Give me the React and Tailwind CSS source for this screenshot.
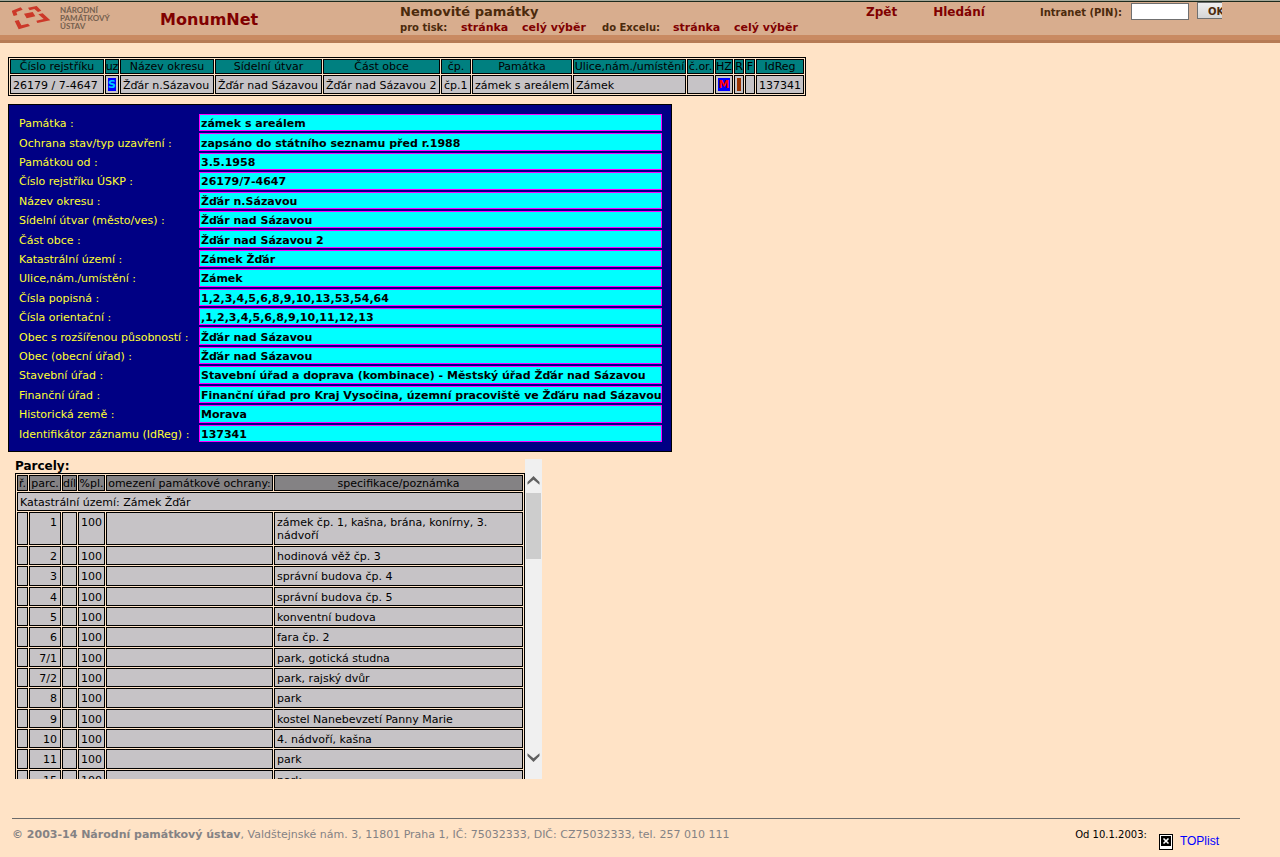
const columns = [
  { label: 'Číslo rejstříku', value: '26179 / 7-4647', width: 'w-[94px]' },
  { label: 'uz', value: 'S', width: 'w-[14px]' },
  { label: 'Název okresu', value: 'Žďár n.Sázavou', width: 'w-[94px]' },
  { label: 'Sídelní útvar', value: 'Žďár nad Sázavou', width: 'w-[107px]' },
  { label: 'Část obce', value: 'Žďár nad Sázavou 2', width: 'w-[117px]' },
  { label: 'čp.', value: 'čp.1', width: 'w-[30px]' },
  { label: 'Památka', value: 'zámek s areálem', width: 'w-[100px]' },
  { label: 'Ulice,nám./umístění', value: 'Zámek', width: 'w-[113px]' },
  { label: 'č.or.', value: '', width: 'w-[27px]' },
  { label: 'HZ', value: 'M', width: 'w-[18px]' },
  { label: 'R', value: '', width: 'w-[10px]' },
  { label: 'F', value: '', width: 'w-[10px]' },
  { label: 'IdReg', value: '137341', width: 'w-[48px]' },
];

const details = [
  ['Památka :', 'zámek s areálem'],
  ['Ochrana stav/typ uzavření :', 'zapsáno do státního seznamu před r.1988'],
  ['Památkou od :', '3.5.1958'],
  ['Číslo rejstříku ÚSKP :', '26179/7-4647'],
  ['Název okresu :', 'Žďár n.Sázavou'],
  ['Sídelní útvar (město/ves) :', 'Žďár nad Sázavou'],
  ['Část obce :', 'Žďár nad Sázavou 2'],
  ['Katastrální území :', 'Zámek Žďár'],
  ['Ulice,nám./umístění :', 'Zámek'],
  ['Čísla popisná :', '1,2,3,4,5,6,8,9,10,13,53,54,64'],
  ['Čísla orientační :', ',1,2,3,4,5,6,8,9,10,11,12,13'],
  ['Obec s rozšířenou působností :', 'Žďár nad Sázavou'],
  ['Obec (obecní úřad) :', 'Žďár nad Sázavou'],
  ['Stavební úřad :', 'Stavební úřad a doprava (kombinace) - Městský úřad Žďár nad Sázavou'],
  ['Finanční úřad :', 'Finanční úřad pro Kraj Vysočina, územní pracoviště ve Žďáru nad Sázavou'],
  ['Historická země :', 'Morava'],
  ['Identifikátor záznamu (IdReg) :', '137341'],
];

const parcels = [
  ['1', 'zámek čp. 1, kašna, brána, konírny, 3. nádvoří'],
  ['2', 'hodinová věž čp. 3'],
  ['3', 'správní budova čp. 4'],
  ['4', 'správní budova čp. 5'],
  ['5', 'konventní budova'],
  ['6', 'fara čp. 2'],
  ['7/1', 'park, gotická studna'],
  ['7/2', 'park, rajský dvůr'],
  ['8', 'park'],
  ['9', 'kostel Nanebevzetí Panny Marie'],
  ['10', '4. nádvoří, kašna'],
  ['11', 'park'],
  ['15', 'park'],
];

const Logo = () => (
  <div className="flex w-[148px] shrink-0 items-start gap-2 pl-3 pt-1">
    <svg viewBox="0 0 120 78" className="h-[26px] w-10 shrink-0" fill="#cc3829" aria-hidden="true">
      <path d="M-1 15 L26 4 L32 11 L13 18 L16 27 L5 30 Z" />
      <path d="M48 5 L74 0 L88 14 L78 18 L67 9 L53 13 Z" />
      <path d="M36 23 L62 18 L70 31 L44 37 Z" />
      <path d="M79 25 L92 22 L115 43 L76 51 L73 44 L95 39 Z" />
      <path d="M8 45 L20 42 L28 58 L48 53 L54 60 L20 70 Z" />
    </svg>
    <div className="font-['Lato',sans-serif] text-[8px] leading-[8px] font-bold text-[#75604f]">
      NÁRODNÍ<br />PAMÁTKOVÝ<br />ÚSTAV
    </div>
  </div>
);

const Header = () => (
  <header className="border-t border-[#a4a89a]">
    <div className="flex h-[34px] border-t border-[#1d2a1d] bg-[#d8ad8e] font-bold text-[#4b2a0c]">
      <Logo />
      <h1 className="w-60 shrink-0 pl-3 pt-2 text-[16px] leading-5 text-[#800000]">MonumNet</h1>
      <div className="w-[466px] shrink-0 pl-3 pt-[2px] whitespace-nowrap">
        <h2 className="text-[13px] leading-4">Nemovité památky</h2>
        <div className="flex items-baseline text-[10px] leading-4">
          <span className="w-[61px]">pro tisk:</span>
          <a href="#" className="w-[61px] text-[11px] text-[#800000]">stránka</a>
          <a href="#" className="w-20 text-[11px] text-[#800000]">celý výběr</a>
          <span className="w-[71px]">do Excelu:</span>
          <a href="#" className="w-[61px] text-[11px] text-[#800000]">stránka</a>
          <a href="#" className="text-[11px] text-[#800000]">celý výběr</a>
        </div>
      </div>
      <nav className="flex w-[186px] shrink-0 gap-9 pl-3 pt-[2px] text-[12px] leading-4 text-[#800000]">
        <a href="#">Zpět</a>
        <a href="#">Hledání</a>
      </nav>
      <form className="flex items-start whitespace-nowrap text-[10px]" onSubmit={(e) => e.preventDefault()}>
        <label htmlFor="pin" className="w-[91px] pt-[3px] leading-4">Intranet (PIN):</label>
        <input id="pin" type="password" className="mt-px h-[17px] w-[58px] border border-[#707070] bg-white" />
        <button className="ml-2 h-[17px] w-[25px] overflow-hidden border border-r-0 border-[#707070] bg-linear-to-b from-[#efefef] to-[#d5d5d5] pt-[3px] pl-[10px] text-left leading-3">
          OK
        </button>
      </form>
    </div>
    <div className="h-[5px] bg-[#c98a62]" />
    <div className="h-[3px] bg-[#b67b55]" />
  </header>
);

const SummaryTable = () => (
  <table className="w-[798px] table-fixed border-separate border-spacing-px border border-black whitespace-nowrap">
    <colgroup>
      {columns.map((c) => <col key={c.label} className={c.width} />)}
    </colgroup>
    <thead>
      <tr className="h-[15px] bg-[#008080] leading-3">
        {columns.map((c) => (
          <th key={c.label} className="border border-black p-0 pt-px font-normal">
            <div className="flex justify-center">{c.label}</div>
          </th>
        ))}
      </tr>
    </thead>
    <tbody>
      <tr className="h-[19px] bg-[#c6c3c6] leading-[13px]">
        {columns.map((c) => (
          <td key={c.label} className="border border-black p-0">
            {c.label === 'uz' && <div className="mx-auto flex w-2 justify-center bg-[#0000ff] font-bold text-[#00c8ff]">S</div>}
            {c.label === 'HZ' && <div className="mx-auto flex w-3 justify-center bg-[#0000ff] font-bold text-[#ff0000]">M</div>}
            {c.label === 'R' && <div className="mx-auto h-[13px] w-1 bg-[#993300]" />}
            {!['uz', 'HZ', 'R'].includes(c.label) && <div className="pt-[2px] pl-[2px]">{c.value}</div>}
          </td>
        ))}
      </tr>
    </tbody>
  </table>
);

const DetailPanel = () => (
  <section className="mt-2 w-[664px] border border-black bg-[#000084] px-[7px] py-[7px]">
    <table className="h-[332px] w-full table-fixed border-separate border-spacing-[2px] whitespace-nowrap">
      <colgroup>
        <col className="w-[179px]" />
        <col className="w-[463px]" />
      </colgroup>
      <tbody className="leading-[13px]">
        {details.map(([label, value]) => (
          <tr key={label}>
            <th className="p-0 pt-[2px] pl-px text-left font-normal text-[#ffff31]">{label}</th>
            <td className="border border-[#ff00ff] bg-[#00ffff] p-0 pt-[2px] pl-px font-bold">{value}</td>
          </tr>
        ))}
      </tbody>
    </table>
  </section>
);

const ParcelTable = () => (
  <table className="w-[510px] table-fixed border-separate border-spacing-px border border-black">
    <colgroup>
      <col className="w-[11px]" />
      <col className="w-8" />
      <col className="w-[15px]" />
      <col className="w-[27px]" />
      <col className="w-[167px]" />
      <col className="w-[249px]" />
    </colgroup>
    <thead>
      <tr className="h-4 bg-[#848284] leading-[13px] whitespace-nowrap">
        {['ř.', 'parc.', 'díl', '%pl.', 'omezení památkové ochrany:', 'specifikace/poznámka'].map((h) => (
          <th key={h} className="border border-black p-0 font-normal">
            <div className="flex justify-center">{h}</div>
          </th>
        ))}
      </tr>
    </thead>
    <tbody className="bg-[#c6c3c6] leading-[13px]">
      <tr className="h-[19px]">
        <td colSpan={6} className="border border-black p-0 pt-[2px] pl-[2px]">Katastrální území: Zámek Žďár</td>
      </tr>
      {parcels.map(([no, note], i) => (
        <tr key={no} className={i === 0 ? 'h-[33px]' : i % 3 === 2 ? 'h-5' : 'h-[19px]'}>
          <td className="border border-black p-0" />
          <td className="border border-black p-0 pt-[3px] pr-[3px] text-right align-top">{no}</td>
          <td className="border border-black p-0" />
          <td className="border border-black p-0 pt-[3px] pr-[2px] text-right align-top">100</td>
          <td className="border border-black p-0" />
          <td className="border border-black p-0 pt-[3px] pr-4 pl-[2px] align-top">{note}</td>
        </tr>
      ))}
    </tbody>
  </table>
);

const ScrollBar = () => (
  <div className="flex w-[17px] shrink-0 flex-col items-center bg-[#f0f0f0] pt-4 pb-4">
    <svg viewBox="0 0 13 10" className="h-[10px] w-[13px]" aria-hidden="true">
      <path d="M0.5 7 L6.5 1 L12.5 7 L12.5 9.8 L6.5 4.8 L0.5 9.8 Z" fill="#606060" />
    </svg>
    <div className="mt-2 h-[66px] w-[15px] bg-[#cdcdcd]" />
    <svg viewBox="0 0 13 10" className="mt-auto h-[10px] w-[13px]" aria-hidden="true">
      <path d="M0.5 3 L6.5 9 L12.5 3 L12.5 0.2 L6.5 5.2 L0.5 0.2 Z" fill="#606060" />
    </svg>
  </div>
);

const Footer = () => (
  <footer className="mt-[39px] mr-10 ml-3 flex items-start border-t border-[#6b6b6b] text-[#848284]">
    <p className="pt-2 leading-4">
      <b>© 2003-14 Národní památkový ústav</b>, Valdštejnské nám. 3, 11801 Praha 1, IČ: 75032333, DIČ: CZ75032333, tel. 257 010 111
    </p>
    <div className="ml-auto flex pr-[21px]">
      <span className="pt-2 text-[10px] leading-4 text-black">Od 10.1.2003:</span>
      <a href="#" className="ml-3 flex items-start gap-[7px] pt-[15px] font-['Liberation_Sans',sans-serif] text-[12px] leading-[14px] text-[#0000ff]">
        <svg viewBox="0 0 14 16" className="h-4 w-[14px]" aria-hidden="true">
          <rect x="0.5" y="0.5" width="13" height="15" fill="#fff" stroke="#000" />
          <rect x="2" y="2" width="10" height="10" fill="#000" />
          <path d="M4.5 4.5 L9.5 9.5 M9.5 4.5 L4.5 9.5" stroke="#fff" strokeWidth="1.6" />
        </svg>
        TOPlist
      </a>
    </div>
  </footer>
);

export default function App() {
  return (
    <div className="min-h-screen bg-[#ffe3c6] font-['DejaVu_Sans',sans-serif] text-[11px] text-black">
      <Header />
      <main className="px-2 pt-[14px]">
        <SummaryTable />
        <DetailPanel />
        <section className="mt-[7px] ml-[7px] flex h-80 overflow-hidden">
          <div>
            <h3 className="h-[14px] text-[12px] leading-[14px] font-bold">Parcely:</h3>
            <ParcelTable />
          </div>
          <ScrollBar />
        </section>
      </main>
      <Footer />
    </div>
  );
}
